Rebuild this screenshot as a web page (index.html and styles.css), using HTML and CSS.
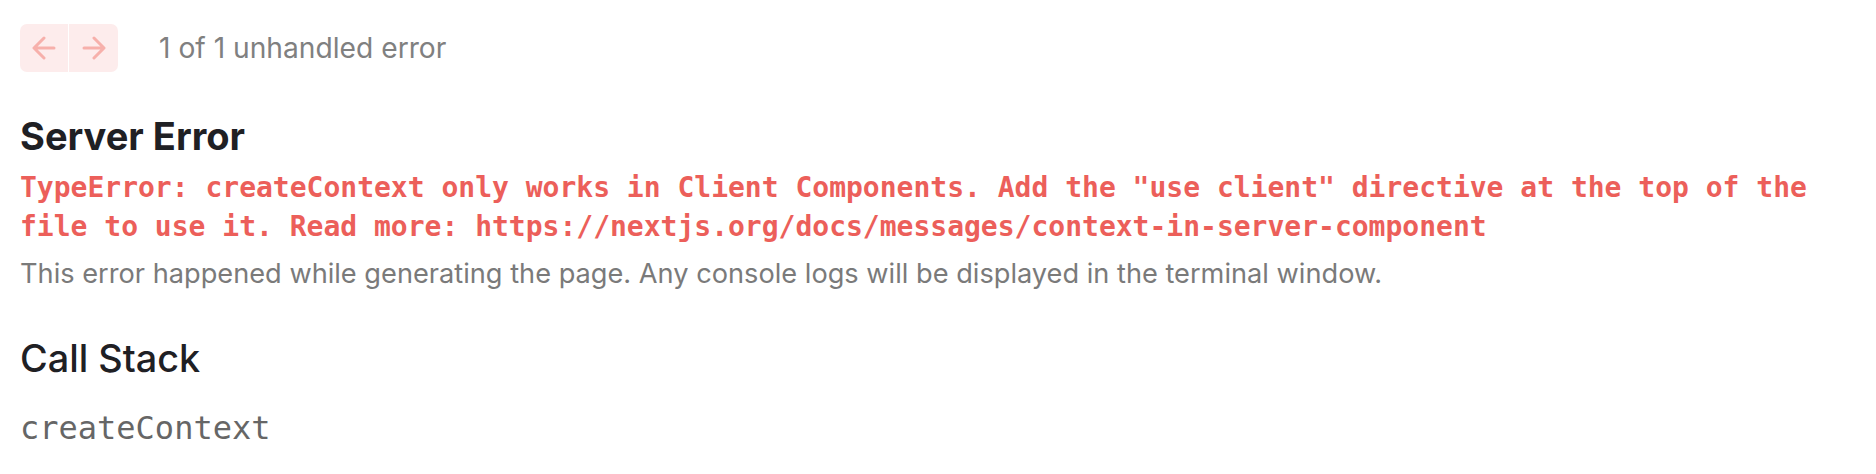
FILE: index.html
```html
<!DOCTYPE html>
<html lang="en">
<head>
<meta charset="utf-8">
<title>Server Error</title>
<link rel="stylesheet" href="styles.css">
</head>
<body>
<div class="overlay">
  <nav class="nav">
    <div class="nav-btns">
      <button class="nav-btn nav-prev" aria-label="previous">
        <svg viewBox="0 0 14 14" width="24" height="24" fill="none"><path d="M7 1.17L1.17 7L7 12.83M12.83 7H2" stroke="currentColor" stroke-width="1.75" stroke-linecap="round" stroke-linejoin="round"/></svg>
      </button>
      <button class="nav-btn nav-next" aria-label="next">
        <svg viewBox="0 0 14 14" width="24" height="24" fill="none"><path d="M7 1.17L12.83 7L7 12.83M1.17 7H12" stroke="currentColor" stroke-width="1.75" stroke-linecap="round" stroke-linejoin="round"/></svg>
      </button>
    </div>
    <small class="count">1 of 1 unhandled error</small>
  </nav>
  <h1 class="title">Server Error</h1>
  <p class="message">TypeError: createContext only works in Client Components. Add the "use client" directive at the top of the file to use it. Read more: https://nextjs.org/docs/messages/context-in-server-component</p>
  <p class="desc">This error happened while generating the page. Any console logs will be displayed in the terminal window.</p>
  <h2 class="stack-title">Call Stack</h2>
  <div class="frame">createContext</div>
</div>
</body>
</html>
```
FILE: styles.css
```css
html, body {
  margin: 0;
  background: #ffffff;
}
body {
  font-family: Inter, "Noto Sans", sans-serif;
}
.overlay {
  padding: 24px 20px;
}
.nav {
  display: flex;
  align-items: center;
  gap: 41px;
  height: 48px;
}
.nav-btns {
  display: flex;
  gap: 1px;
}
.nav-btn {
  width: 48px;
  height: 48px;
  padding: 0;
  border: none;
  background: #fdecec;
  color: #f7b0ab;
  display: flex;
  align-items: center;
  justify-content: center;
}
.nav-prev {
  border-radius: 7px 0 0 7px;
}
.nav-next {
  width: 49px;
  border-radius: 0 7px 7px 0;
}
.count {
  font-size: 28.2px;
  color: #808080;
}
.title {
  margin: 43px 0 0;
  font-size: 38px;
  line-height: 43px;
  font-weight: 700;
  color: #1f2024;
}
.message {
  margin: 10px 0 0;
  font-family: "DejaVu Sans Mono", "Liberation Mono", monospace;
  font-size: 28px;
  line-height: 39px;
  font-weight: 700;
  color: #ec5f5a;
}
.desc {
  margin: 9px 0 0;
  font-size: 27.2px;
  line-height: 37px;
  color: #7a7a7a;
}
.stack-title {
  margin: 45px 0 0;
  font-size: 37.8px;
  line-height: 43px;
  font-weight: 500;
  color: #1f2024;
}
.frame {
  margin-top: 24px;
  font-family: "DejaVu Sans Mono", "Liberation Mono", monospace;
  font-size: 32px;
  line-height: 48px;
  color: #666666;
}
```
